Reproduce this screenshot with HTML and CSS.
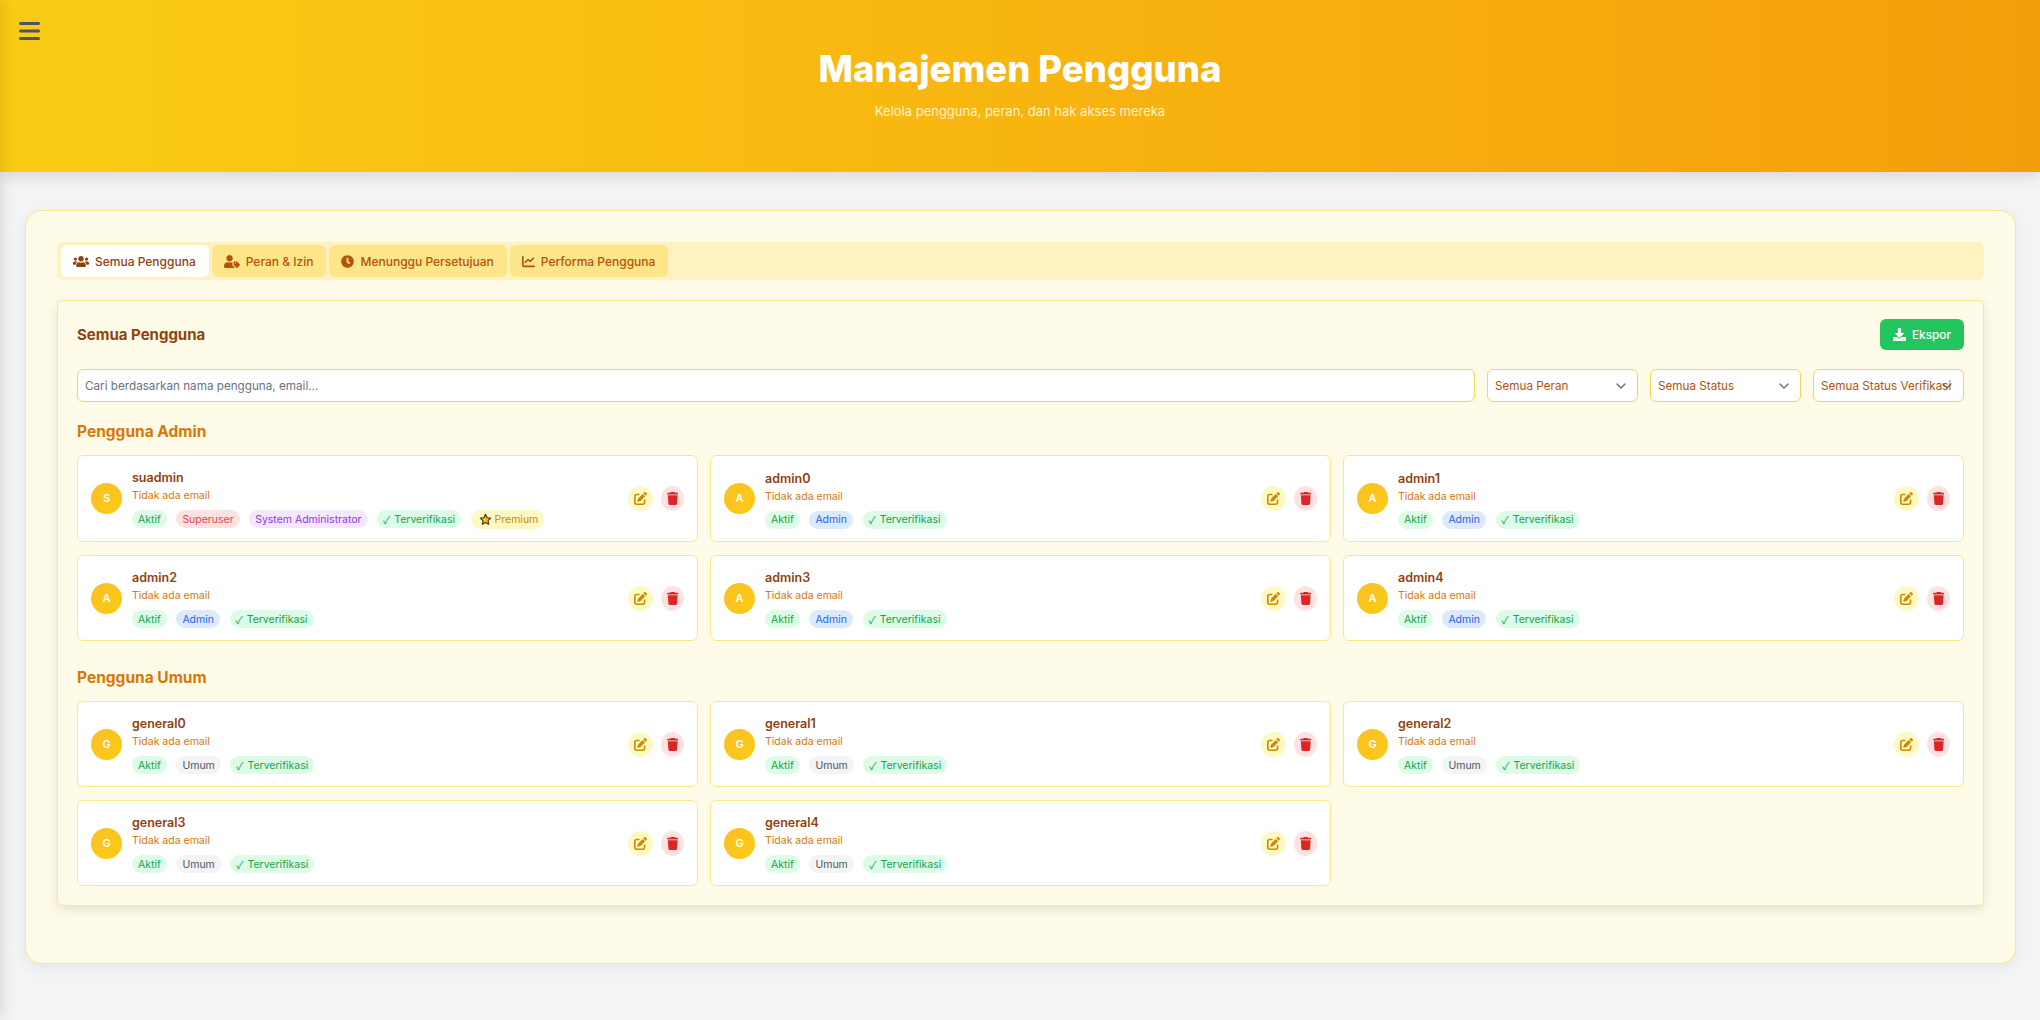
FILE: index.html
```html
<!DOCTYPE HTML>
<html>
<head>
	<meta charset="utf-8">
	<title>Manajemen Pengguna</title>
	<link rel="stylesheet" href="styles.css">
</head>
<body>
	<svg class="defs" xmlns="http://www.w3.org/2000/svg">
		<symbol id="i-bars" viewBox="0 0 448 512"><path d="M0 96C0 78.3 14.3 64 32 64H416c17.7 0 32 14.3 32 32s-14.3 32-32 32H32C14.3 128 0 113.7 0 96zM0 256c0-17.7 14.3-32 32-32H416c17.7 0 32 14.3 32 32s-14.3 32-32 32H32c-17.7 0-32-14.3-32-32zM448 416c0 17.7-14.3 32-32 32H32c-17.7 0-32-14.3-32-32s14.3-32 32-32H416c17.7 0 32 14.3 32 32z"/></symbol>
		<symbol id="i-users" viewBox="0 0 640 512"><path d="M96 224c35.3 0 64-28.7 64-64s-28.7-64-64-64-64 28.7-64 64 28.7 64 64 64zm448 0c35.3 0 64-28.7 64-64s-28.7-64-64-64-64 28.7-64 64 28.7 64 64 64zm32 32h-64c-17.6 0-33.5 7.1-45.1 18.6 40.3 22.1 68.9 62 75.1 109.4h66c17.7 0 32-14.3 32-32v-32c0-35.3-28.7-64-64-64zm-256 0c61.9 0 112-50.1 112-112S381.9 32 320 32 208 82.1 208 144s50.1 112 112 112zm76.8 32h-8.3c-20.8 10-43.9 16-68.5 16s-47.6-6-68.5-16h-8.3C179.6 288 128 339.6 128 403.2V432c0 26.5 21.5 48 48 48h288c26.5 0 48-21.5 48-48v-28.8c0-63.6-51.6-115.2-115.2-115.2zm-223.7-13.4C161.5 263.1 145.6 256 128 256H64c-35.3 0-64 28.7-64 64v32c0 17.7 14.3 32 32 32h65.9c6.3-47.4 34.9-87.3 75.2-109.4z"/></symbol>
		<symbol id="i-usertag" viewBox="0 0 640 512"><path d="M630.6 364.9l-90.3-90.2c-12-12-28.3-18.7-45.3-18.7h-80.7c-17.7 0-32 14.3-32 32v80.6c0 17 6.7 33.2 18.7 45.2l90.3 90.2c12.5 12.5 32.8 12.5 45.3 0l94-94c12.5-12.4 12.5-32.7 0-45.1zM464 344c-13.3 0-24-10.7-24-24s10.7-24 24-24 24 10.7 24 24-10.7 24-24 24zM224 256c70.7 0 128-57.3 128-128S294.7 0 224 0 96 57.3 96 128s57.3 128 128 128zm110 121V288.8C318 284 302 282 286 285c-19 7-40 11-62 11s-43-4-62-11h-16C65 285 0 350 0 430v34c0 26.5 21.5 48 48 48h352c11 0 21-4 29-10l-76-78c-12-12-19-28-19-47z"/></symbol>
		<symbol id="i-clock" viewBox="0 0 512 512"><path d="M256 8C119 8 8 119 8 256s111 248 248 248 248-111 248-248S393 8 256 8zm57.1 350.1L224.9 294c-3.1-2.3-4.9-5.9-4.9-9.7V116c0-6.6 5.4-12 12-12h48c6.6 0 12 5.4 12 12v137.7l63.5 46.2c5.4 3.9 6.5 11.4 2.6 16.8l-28.2 38.8c-3.9 5.3-11.4 6.5-16.8 2.6z"/></symbol>
		<symbol id="i-chart" viewBox="0 0 512 512"><path d="M64 64c0-17.7-14.3-32-32-32S0 46.3 0 64V400c0 44.2 35.8 80 80 80H480c17.7 0 32-14.3 32-32s-14.3-32-32-32H80c-8.8 0-16-7.2-16-16V64zm406.6 86.6c12.5-12.5 12.5-32.8 0-45.3s-32.8-12.5-45.3 0L320 210.7l-57.4-57.4c-12.5-12.5-32.8-12.5-45.3 0l-112 112c-12.5 12.5-12.5 32.8 0 45.3s32.8 12.5 45.3 0L240 221.3l57.4 57.4c12.5 12.5 32.8 12.5 45.3 0l128-128z"/></symbol>
		<symbol id="i-download" viewBox="0 0 512 512"><path d="M216 0h80c13.3 0 24 10.7 24 24v168h87.7c17.8 0 26.7 21.5 14.1 34.1L269.7 378.3c-7.5 7.5-19.8 7.5-27.3 0L90.1 226.1c-12.6-12.6-3.7-34.1 14.1-34.1H192V24c0-13.3 10.7-24 24-24zm296 376v112c0 13.3-10.7 24-24 24H24c-13.3 0-24-10.7-24-24V376c0-13.3 10.7-24 24-24h146.7l49 49c20.1 20.1 52.5 20.1 72.6 0l49-49H488c13.3 0 24 10.7 24 24zm-124 88c0-11-9-20-20-20s-20 9-20 20 9 20 20 20 20-9 20-20zm64 0c0-11-9-20-20-20s-20 9-20 20 9 20 20 20 20-9 20-20z"/></symbol>
		<symbol id="i-edit" viewBox="0 0 512 512"><path d="M471.6 21.7c-21.9-21.9-57.3-21.9-79.2 0L362.3 51.7l97.9 97.9 30.1-30.1c21.9-21.9 21.9-57.3 0-79.2L471.6 21.7zm-299.2 220c-6.1 6.1-10.8 13.6-13.5 21.9l-29.6 88.8c-2.9 8.6-.6 18.1 5.8 24.6s15.9 8.7 24.6 5.8l88.8-29.6c8.2-2.7 15.7-7.4 21.9-13.5L437.7 172.3 339.7 74.3 172.4 241.7zM96 64C43 64 0 107 0 160V416c0 53 43 96 96 96H352c53 0 96-43 96-96V320c0-17.7-14.3-32-32-32s-32 14.3-32 32v96c0 17.7-14.3 32-32 32H96c-17.7 0-32-14.3-32-32V160c0-17.7 14.3-32 32-32h96c17.7 0 32-14.3 32-32s-14.3-32-32-32H96z"/></symbol>
		<symbol id="i-trash" viewBox="0 0 448 512"><path d="M135.2 17.7L128 32H32C14.3 32 0 46.3 0 64S14.3 96 32 96H416c17.7 0 32-14.3 32-32s-14.3-32-32-32H320l-7.2-14.3C307.4 6.8 296.3 0 284.2 0H163.8c-12.1 0-23.2 6.8-28.6 17.7zM416 128H32L53.2 467c1.6 25.3 22.6 45 47.9 45H346.9c25.3 0 46.3-19.7 47.9-45L416 128z"/></symbol>
		<symbol id="i-star" viewBox="0 0 24 24"><path fill="#fbbf24" stroke="#3f2f10" stroke-width="2" stroke-linejoin="round" d="M12 2.5l2.9 6.2 6.7.8-5 4.6 1.4 6.7-6-3.4-6 3.4 1.4-6.7-5-4.6 6.700-.8z"/></symbol>
	</svg>

	<div class="sidebar"></div>

	<header class="topbar">
		<button class="menu-btn"><svg class="menu-icon"><use href="#i-bars"/></svg></button>
		<h1>Manajemen Pengguna</h1>
		<p>Kelola pengguna, peran, dan hak akses mereka</p>
	</header>

	<main class="page">
		<div class="tabs">
			<button class="tab active"><svg class="tab-icon"><use href="#i-users"/></svg>Semua Pengguna</button>
			<button class="tab"><svg class="tab-icon"><use href="#i-usertag"/></svg>Peran &amp; Izin</button>
			<button class="tab"><svg class="tab-icon tab-icon-sm"><use href="#i-clock"/></svg>Menunggu Persetujuan</button>
			<button class="tab"><svg class="tab-icon tab-icon-sm"><use href="#i-chart"/></svg>Performa Pengguna</button>
		</div>

		<section class="panel">
			<div class="panel-head">
				<h2>Semua Pengguna</h2>
				<button class="export"><svg class="export-icon"><use href="#i-download"/></svg>Ekspor</button>
			</div>

			<div class="filters">
				<input class="search" type="text" placeholder="Cari berdasarkan nama pengguna, email...">
				<select class="pick"><option>Semua Peran</option></select>
				<select class="pick"><option>Semua Status</option></select>
				<select class="pick"><option>Semua Status Verifikasi</option></select>
			</div>

			<h3 class="group-title">Pengguna Admin</h3>
			<div class="user-grid">
				<div class="user">
					<div class="avatar">S</div>
					<div class="info">
						<div class="name">suadmin</div>
						<div class="email">Tidak ada email</div>
						<div class="badges">
							<span class="badge green">Aktif</span>
							<span class="badge red">Superuser</span>
							<span class="badge purple">System Administrator</span>
							<span class="badge green"><span class="tick">✓</span>Terverifikasi</span>
							<span class="badge yellow"><svg class="star"><use href="#i-star"/></svg>Premium</span>
						</div>
					</div>
					<div class="actions">
						<button class="act edit"><svg class="act-icon"><use href="#i-edit"/></svg></button>
						<button class="act del"><svg class="act-icon"><use href="#i-trash"/></svg></button>
					</div>
				</div>
				<div class="user">
					<div class="avatar">A</div>
					<div class="info">
						<div class="name">admin0</div>
						<div class="email">Tidak ada email</div>
						<div class="badges">
							<span class="badge green">Aktif</span>
							<span class="badge blue">Admin</span>
							<span class="badge green"><span class="tick">✓</span>Terverifikasi</span>
						</div>
					</div>
					<div class="actions">
						<button class="act edit"><svg class="act-icon"><use href="#i-edit"/></svg></button>
						<button class="act del"><svg class="act-icon"><use href="#i-trash"/></svg></button>
					</div>
				</div>
				<div class="user">
					<div class="avatar">A</div>
					<div class="info">
						<div class="name">admin1</div>
						<div class="email">Tidak ada email</div>
						<div class="badges">
							<span class="badge green">Aktif</span>
							<span class="badge blue">Admin</span>
							<span class="badge green"><span class="tick">✓</span>Terverifikasi</span>
						</div>
					</div>
					<div class="actions">
						<button class="act edit"><svg class="act-icon"><use href="#i-edit"/></svg></button>
						<button class="act del"><svg class="act-icon"><use href="#i-trash"/></svg></button>
					</div>
				</div>
				<div class="user">
					<div class="avatar">A</div>
					<div class="info">
						<div class="name">admin2</div>
						<div class="email">Tidak ada email</div>
						<div class="badges">
							<span class="badge green">Aktif</span>
							<span class="badge blue">Admin</span>
							<span class="badge green"><span class="tick">✓</span>Terverifikasi</span>
						</div>
					</div>
					<div class="actions">
						<button class="act edit"><svg class="act-icon"><use href="#i-edit"/></svg></button>
						<button class="act del"><svg class="act-icon"><use href="#i-trash"/></svg></button>
					</div>
				</div>
				<div class="user">
					<div class="avatar">A</div>
					<div class="info">
						<div class="name">admin3</div>
						<div class="email">Tidak ada email</div>
						<div class="badges">
							<span class="badge green">Aktif</span>
							<span class="badge blue">Admin</span>
							<span class="badge green"><span class="tick">✓</span>Terverifikasi</span>
						</div>
					</div>
					<div class="actions">
						<button class="act edit"><svg class="act-icon"><use href="#i-edit"/></svg></button>
						<button class="act del"><svg class="act-icon"><use href="#i-trash"/></svg></button>
					</div>
				</div>
				<div class="user">
					<div class="avatar">A</div>
					<div class="info">
						<div class="name">admin4</div>
						<div class="email">Tidak ada email</div>
						<div class="badges">
							<span class="badge green">Aktif</span>
							<span class="badge blue">Admin</span>
							<span class="badge green"><span class="tick">✓</span>Terverifikasi</span>
						</div>
					</div>
					<div class="actions">
						<button class="act edit"><svg class="act-icon"><use href="#i-edit"/></svg></button>
						<button class="act del"><svg class="act-icon"><use href="#i-trash"/></svg></button>
					</div>
				</div>
			</div>

			<h3 class="group-title second">Pengguna Umum</h3>
			<div class="user-grid">
				<div class="user">
					<div class="avatar">G</div>
					<div class="info">
						<div class="name">general0</div>
						<div class="email">Tidak ada email</div>
						<div class="badges">
							<span class="badge green">Aktif</span>
							<span class="badge gray">Umum</span>
							<span class="badge green"><span class="tick">✓</span>Terverifikasi</span>
						</div>
					</div>
					<div class="actions">
						<button class="act edit"><svg class="act-icon"><use href="#i-edit"/></svg></button>
						<button class="act del"><svg class="act-icon"><use href="#i-trash"/></svg></button>
					</div>
				</div>
				<div class="user">
					<div class="avatar">G</div>
					<div class="info">
						<div class="name">general1</div>
						<div class="email">Tidak ada email</div>
						<div class="badges">
							<span class="badge green">Aktif</span>
							<span class="badge gray">Umum</span>
							<span class="badge green"><span class="tick">✓</span>Terverifikasi</span>
						</div>
					</div>
					<div class="actions">
						<button class="act edit"><svg class="act-icon"><use href="#i-edit"/></svg></button>
						<button class="act del"><svg class="act-icon"><use href="#i-trash"/></svg></button>
					</div>
				</div>
				<div class="user">
					<div class="avatar">G</div>
					<div class="info">
						<div class="name">general2</div>
						<div class="email">Tidak ada email</div>
						<div class="badges">
							<span class="badge green">Aktif</span>
							<span class="badge gray">Umum</span>
							<span class="badge green"><span class="tick">✓</span>Terverifikasi</span>
						</div>
					</div>
					<div class="actions">
						<button class="act edit"><svg class="act-icon"><use href="#i-edit"/></svg></button>
						<button class="act del"><svg class="act-icon"><use href="#i-trash"/></svg></button>
					</div>
				</div>
				<div class="user">
					<div class="avatar">G</div>
					<div class="info">
						<div class="name">general3</div>
						<div class="email">Tidak ada email</div>
						<div class="badges">
							<span class="badge green">Aktif</span>
							<span class="badge gray">Umum</span>
							<span class="badge green"><span class="tick">✓</span>Terverifikasi</span>
						</div>
					</div>
					<div class="actions">
						<button class="act edit"><svg class="act-icon"><use href="#i-edit"/></svg></button>
						<button class="act del"><svg class="act-icon"><use href="#i-trash"/></svg></button>
					</div>
				</div>
				<div class="user">
					<div class="avatar">G</div>
					<div class="info">
						<div class="name">general4</div>
						<div class="email">Tidak ada email</div>
						<div class="badges">
							<span class="badge green">Aktif</span>
							<span class="badge gray">Umum</span>
							<span class="badge green"><span class="tick">✓</span>Terverifikasi</span>
						</div>
					</div>
					<div class="actions">
						<button class="act edit"><svg class="act-icon"><use href="#i-edit"/></svg></button>
						<button class="act del"><svg class="act-icon"><use href="#i-trash"/></svg></button>
					</div>
				</div>
			</div>
		</section>
	</main>
</body>
</html>
```

FILE: styles.css
```css
* {box-sizing:border-box;}
body {margin:0; background-color:#f3f4f6; font-family:Inter, "Liberation Sans", sans-serif; color:#92400e; min-height:1020px;}
button {font-family:inherit; border:none; cursor:pointer;}
.defs {display:none;}

/* closed sidebar, only its shadow shows on the left edge */
.sidebar {position:fixed; top:0; left:-260px; width:260px; height:100%; box-shadow:0 0 15px rgba(0,0,0,0.15); z-index:5;}

.topbar {position:relative; height:172px; padding-top:49px; text-align:center; color:#fff; background:linear-gradient(90deg, #facc15, #f59e0b); box-shadow:0 4px 15px rgba(0,0,0,0.12);}
.topbar h1 {margin:0; font-size:36.5px; line-height:40px; font-weight:800;}
.topbar p {margin:12px 0 0; font-size:13px; line-height:20px; color:#fef3c7;}
.menu-btn {position:absolute; top:19px; left:19px; padding:0; background:none; line-height:0;}
.menu-icon {width:21px; height:24px; fill:#4b5563;}

.page {margin:38px 24px 0 25px; padding:31px 31px 57px; background-color:#fefce8; border:1px solid #fde68a; border-radius:16px; box-shadow:0 4px 15px rgba(0,0,0,0.06);}

.tabs {display:flex; gap:3px; padding:3px 4px; background-color:#fef3c0; border-radius:6px;}
.tab {display:flex; align-items:center; height:32px; padding:0 13px 0 12px; font-size:12px; font-weight:500; color:#b45309; background-color:#fde68a; border-radius:6px;}
.tab.active {background-color:#fff; color:#92400e;}
.tab-icon {width:16px; height:13px; margin-right:6px; fill:currentColor;}
.tab-icon-sm {width:13px; margin-right:6px;}

.panel {margin-top:20px; padding:18px 19px 19px; border:1px solid #fde68a; border-radius:6px; background-color:#fefce8; box-shadow:0 4px 12px rgba(0,0,0,0.1);}
.panel-head {display:flex; justify-content:space-between; align-items:center;}
.panel-head h2 {margin:0; font-size:15px; font-weight:700; color:#92400e;}
.export {display:flex; align-items:center; height:31px; padding:0 13px 0 13px; font-size:11.8px; font-weight:500; color:#fff; background-color:#22c55e; border-radius:6px;}
.export-icon {width:13px; height:13px; margin-right:6px; fill:#fff;}

.filters {display:flex; gap:12px; margin-top:19px;}
.search, .pick {height:33px; font-family:inherit; font-size:11.7px; background-color:#fff; border:1px solid #fcd34d; border-radius:6px; outline:none;}
.search {flex:1; padding:0 7px; color:#4b5563;}
.search::placeholder {color:#6b7280; opacity:1;}
.pick {width:151px; padding:0 7px; color:#b45309; appearance:none; background-image:url("data:image/svg+xml,%3Csvg xmlns='http://www.w3.org/2000/svg' viewBox='0 0 20 20' fill='none'%3E%3Cpath stroke='%236b7280' stroke-width='1.5' stroke-linecap='round' stroke-linejoin='round' d='M6 8l4 4 4-4'/%3E%3C/svg%3E"); background-repeat:no-repeat; background-position:right 6px center; background-size:20px 20px;}

.group-title {margin:18px 0 11px; font-size:15.5px; line-height:24px; font-weight:700; color:#d97706;}
.group-title.second {margin-top:25px; margin-bottom:11px;}

.user-grid {display:grid; grid-template-columns:repeat(3, 1fr); gap:13px 12px;}
.user {display:flex; align-items:center; padding:12px 13px 12px 12px; background-color:#fff; border:1px solid #fde68a; border-radius:6px;}
.avatar {flex:none; width:31px; height:31px; line-height:31px; margin:0 10px 0 1px; text-align:center; font-size:11px; font-weight:600; color:#fff; border-radius:50%; background:linear-gradient(135deg, #fbbf24, #facc15);}
.info {flex:1; min-width:0;}
.name {font-size:12.5px; line-height:20px; font-weight:600; color:#92400e;}
.email {font-size:10.5px; line-height:16px; color:#d97706;}
.badges {display:flex; align-items:flex-start; gap:9.5px; margin-top:6px;}
.badge {display:flex; align-items:center; height:18px; padding:0 6px; font-size:10.5px; border-radius:9px; white-space:nowrap;}
.tick {margin-right:4px; font-family:"Noto Sans CJK JP", "DejaVu Sans", sans-serif; font-size:10.5px;}
.green {background-color:#dcfce7; color:#16a34a;}
.blue {background-color:#dbeafe; color:#2563eb;}
.red {background-color:#fee2e2; color:#ef4444;}
.purple {background-color:#f3e8ff; color:#9333ea;}
.yellow {background-color:#fef9c3; color:#ca8a04; padding-left:8px; height:19px;}
.gray {background-color:#f3f4f6; color:#4b5563;}
.star {width:13px; height:13px; margin-right:3px;}

.actions {display:flex; gap:8px;}
.act {display:flex; align-items:center; justify-content:center; height:25px; padding:0; border-radius:50%;}
.act-icon {height:13px; fill:currentColor;}
.edit {width:25px; background-color:#fef9c3; color:#ca8a04;}
.edit .act-icon {width:13px;}
.del {width:23px; background-color:#fee2e2; color:#dc2626;}
.del .act-icon {width:11.5px;}
```
